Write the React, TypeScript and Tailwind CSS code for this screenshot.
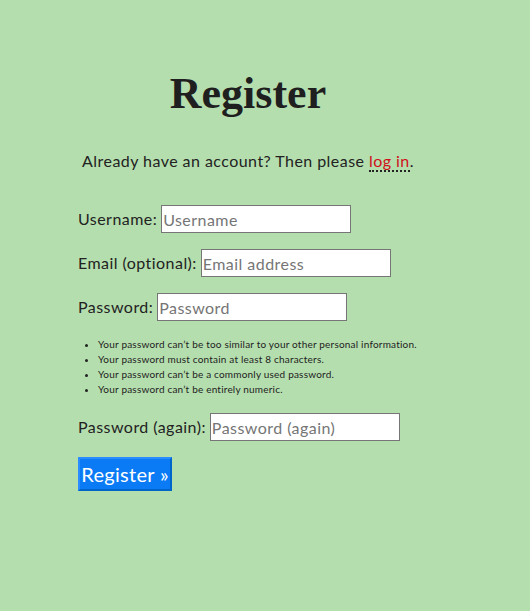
export default function App() {
  const rules = [
    "Your password can\u2019t be too similar to your other personal information.",
    "Your password must contain at least 8 characters.",
    "Your password can\u2019t be a commonly used password.",
    "Your password can\u2019t be entirely numeric.",
  ]

  const field = (label: string, placeholder: string, type = "text") => (
    <div className="flex h-[28px] items-center">
      <label className="mr-[4px]">{label}</label>
      <input
        type={type}
        placeholder={placeholder}
        className="h-[28px] w-[190px] border border-[#767676] bg-white px-[1px] text-[16px] tracking-[0.45px] text-[#222] outline-none placeholder:text-[#757575]"
      />
    </div>
  )

  return (
    <div className="min-h-[611px] w-full bg-[#b5deae] font-['Lato','Open_Sans',sans-serif] text-[16px] tracking-[0.45px] text-[#222]">
      <div className="ml-[78px] w-[340px] pt-[64px]">
        <h1 className="text-center font-['Liberation_Serif',serif] text-[44px] leading-[60px] font-bold tracking-normal text-[#1f1f1f]">
          Register
        </h1>
        <p className="mt-[27px] text-center leading-[20px]">
          Already have an account? Then please{" "}
          <a href="#" className="border-b-2 border-dotted border-[#222] text-[#d0101a]">
            log in
          </a>
          .
        </p>
        <form className="mt-[34px] flex flex-col">
          <div className="flex flex-col gap-[16px]">
            {field("Username:", "Username")}
            {field("Email (optional):", "Email address", "email")}
            {field("Password:", "Password", "password")}
          </div>
          <ul className="mt-[16px] list-disc pl-[20px] text-[10px] leading-[15px] tracking-[0.2px]">
            {rules.map((r) => (
              <li key={r}>{r}</li>
            ))}
          </ul>
          <div className="mt-[16px]">{field("Password (again):", "Password (again)", "password")}</div>
          <div className="mt-[16px]">
            <button
              type="button"
              className="h-[34px] w-[94px] whitespace-nowrap border-2 border-[#0064c8] border-t-[#2a8cff] border-l-[#2a8cff] bg-[#0a7bf5] px-0 text-[20px] leading-none tracking-[0.3px] text-white"
            >
              Register »
            </button>
          </div>
        </form>
      </div>
    </div>
  )
}
